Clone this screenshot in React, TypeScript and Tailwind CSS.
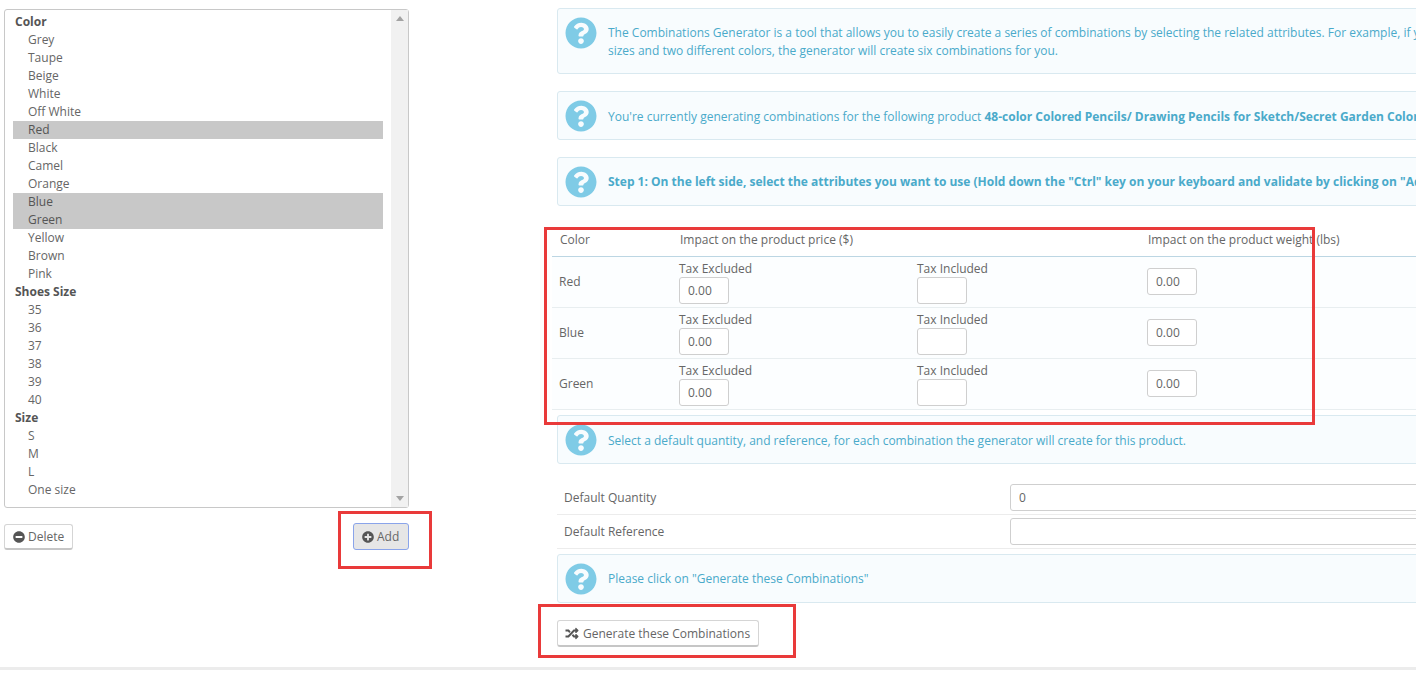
import React from "react";
import { FaQuestionCircle, FaMinusCircle, FaPlusCircle, FaRandom } from "react-icons/fa";

const groups: [string, string[]][] = [
  ["Color", ["Grey", "Taupe", "Beige", "White", "Off White", "Red", "Black", "Camel", "Orange", "Blue", "Green", "Yellow", "Brown", "Pink"]],
  ["Shoes Size", ["35", "36", "37", "38", "39", "40"]],
  ["Size", ["S", "M", "L", "One size"]],
];
const selected = ["Red", "Blue", "Green"];

function Info({ children, tall, textTop = "mt-[8px]", className = "" }: { children: React.ReactNode; tall?: boolean; textTop?: string; className?: string }) {
  return (
    <div className={`flex items-start gap-[11px] border border-[#d9e9f0] rounded-[3px] bg-[#f8fcfe] pl-[7px] pt-[8px] text-[#4aaaca] whitespace-nowrap ${tall ? "h-[66px]" : "h-[49px]"} ${className}`}>
      <FaQuestionCircle className="w-[32px] h-[32px] shrink-0 text-[#7fcbe6]" />
      <div className={`${textTop} leading-[18px]`}>{children}</div>
    </div>
  );
}

function Field({ value }: { value?: string }) {
  return (
    <input
      readOnly
      value={value ?? ""}
      className="block w-[50px] h-[27px] border border-[#cfcfcf] rounded-[3px] bg-white px-[8px] text-[12px] text-[#666] outline-none"
    />
  );
}

function Row({ name }: { name: string }) {
  return (
    <div className="flex h-[51px] border-b border-[#e8eef0] bg-[#fcfeff]">
      <div className="w-[127px] pl-[7px] pt-[16px] leading-[18px]">{name}</div>
      <div className="w-[238px] pt-[3px]">
        <div className="leading-[17px]">Tax Excluded</div>
        <Field value="0.00" />
      </div>
      <div className="w-[230px] pt-[3px]">
        <div className="leading-[17px]">Tax Included</div>
        <Field />
      </div>
      <div className="pt-[11px]">
        <Field value="0.00" />
      </div>
    </div>
  );
}

function DefaultRow({ label, value, h }: { label: string; value?: string; h: string }) {
  return (
    <div className={`flex items-end border-b border-[#ececec] pb-[3px] ${h}`}>
      <div className="w-[453px] pl-[7px] self-center leading-[18px] mt-[4px]">{label}</div>
      <input readOnly value={value ?? ""} className="w-[600px] h-[27px] border border-[#cfcfcf] rounded-[3px] bg-white px-[8px] text-[12px] text-[#666] outline-none" />
    </div>
  );
}

export default function App() {
  return (
    <div className="relative w-[1416px] h-[674px] overflow-hidden bg-white text-[12px] text-[#666]" style={{ fontFamily: '"Open Sans", sans-serif' }}>
      <div className="flex h-[667px]">
        <div className="w-[557px] shrink-0 pl-[4px] pt-[9px]">
          <div className="flex w-[405px] h-[499px] border border-[#c8c8c8] rounded-[3px] bg-white">
            <div className="flex-1 pl-[8px] pr-[8px] pt-[3px]">
              {groups.map(([g, items]) => (
                <div key={g}>
                  <div className="h-[18px] leading-[18px] pl-[2px] font-bold text-[#555]">{g}</div>
                  {items.map((i) => (
                    <div key={i} className={`h-[18px] leading-[18px] pl-[15px] ${selected.includes(i) ? "bg-[#c8c8c8] text-[#555]" : ""}`}>{i}</div>
                  ))}
                </div>
              ))}
            </div>
            <div className="w-[17px] bg-[#f1f1f1] flex flex-col justify-between items-center py-[6px]">
              <svg width="8" height="5" viewBox="0 0 8 5"><path d="M4 0L8 5H0z" fill="#a3a3a3" /></svg>
              <svg width="8" height="5" viewBox="0 0 8 5"><path d="M4 5L8 0H0z" fill="#a3a3a3" /></svg>
            </div>
          </div>
          <div className="flex justify-between items-start w-[405px] mt-[15px]">
            <button className="flex items-center gap-[3px] mt-[1px] h-[26px] px-[8px] border border-[#d5d5d5] border-b-[2px] border-b-[#c6c6c6] rounded-[3px] bg-white text-[#666]">
              <FaMinusCircle className="w-[12px] h-[12px] text-[#555]" />
              Delete
            </button>
            <button className="flex items-center gap-[3px] w-[56px] h-[27px] pl-[8px] border border-[#8aa4ea] rounded-[3px] bg-[#e6e6e6] text-[#666]">
              <FaPlusCircle className="w-[12px] h-[12px] text-[#555]" />
              Add
            </button>
          </div>
        </div>

        <div className="w-[1100px] shrink-0 pt-[8px]">
          <Info tall textTop="mt-[7px]">
            The Combinations Generator is a tool that allows you to easily create a series of combinations by selecting the related attributes. For example, if you're selling t-shirts in three different
            <br />
            sizes and two different colors, the generator will create six combinations for you.
          </Info>
          <Info className="mt-[17px]">
            You're currently generating combinations for the following product <b>48-color Colored Pencils/ Drawing Pencils for Sketch/Secret Garden Coloring Book</b>
          </Info>
          <Info className="mt-[17px]" textTop="mt-[7px]">
            <b>Step 1: On the left side, select the attributes you want to use (Hold down the "Ctrl" key on your keyboard and validate by clicking on "Add")</b>
          </Info>

          <div className="-ml-[5px] mt-[21px]">
            <div className="flex h-[30px] items-center border-b border-[#bcd6e3] pb-[3px]">
              <div className="w-[128px] pl-[8px]">Color</div>
              <div className="w-[468px]">Impact on the product price ($)</div>
              <div>Impact on the product weight (lbs)</div>
            </div>
            <Row name="Red" />
            <Row name="Blue" />
            <Row name="Green" />
          </div>

          <Info className="mt-[5px]">
            Select a default quantity, and reference, for each combination the generator will create for this product.
          </Info>

          <div className="mt-[16px]">
            <DefaultRow label="Default Quantity" value="0" h="h-[35px]" />
            <DefaultRow label="Default Reference" h="h-[34px]" />
          </div>

          <Info className="mt-[5px]" textTop="mt-[7px]">Please click on "Generate these Combinations"</Info>

          <button className="flex items-center gap-[4px] mt-[17px] w-[202px] h-[27px] pl-[7px] pt-[1px] border border-[#d5d5d5] border-b-[2px] border-b-[#c6c6c6] rounded-[3px] bg-white text-[#666] whitespace-nowrap">
            <FaRandom className="w-[14px] h-[13px] text-[#555]" />
            Generate these Combinations
          </button>
        </div>
      </div>
      <div className="h-[3px] bg-[#ececec]" />

      <div className="absolute left-[544px] top-[227px] w-[771px] h-[198px] border-[3px] border-[#e93a3a]" />
      <div className="absolute left-[338px] top-[511px] w-[94px] h-[58px] border-[3px] border-[#e93a3a]" />
      <div className="absolute left-[538px] top-[604px] w-[258px] h-[54px] border-[3px] border-[#e93a3a]" />
    </div>
  );
}
